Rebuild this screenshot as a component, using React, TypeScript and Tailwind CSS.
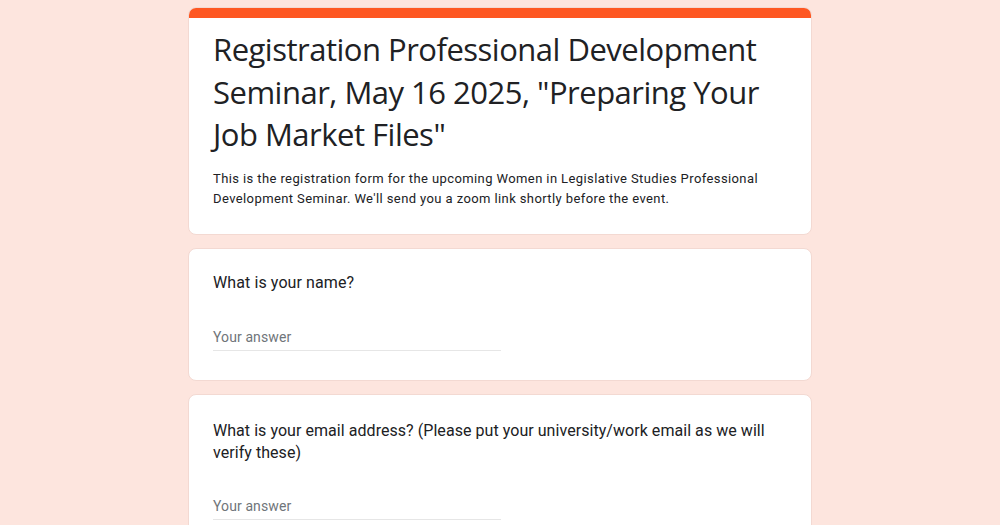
export default function App() {
  return (
    <div className="min-h-[525px] bg-[#fde5de] pt-[7px] font-['Roboto',sans-serif]">
      <div className="mx-auto flex w-[624px] flex-col gap-[13px]">
        {/* Header card */}
        <div className="overflow-hidden rounded-lg border border-[#f3d9d2] bg-white">
          <div className="h-[10px] bg-[#fe5722]" />
          <div className="px-6 pb-[25px] pt-[10px]">
            <h1 className="font-['Open_Sans',sans-serif] text-[31px] leading-[42.5px] tracking-[-0.5px] text-[#202124]">
              Registration Professional Development Seminar, May 16 2025, "Preparing Your Job Market Files"
            </h1>
            <p className="mt-[13px] text-[13px] leading-[20px] tracking-[0.4px] text-[#202124]">
              This is the registration form for the upcoming Women in Legislative Studies Professional Development Seminar. We'll send you a zoom link shortly before the event.
            </p>
          </div>
        </div>

        {/* Question: name */}
        <div className="rounded-lg border border-[#f3d9d2] bg-white px-6 pb-[29px] pt-[23px]">
          <div className="text-[16px] leading-[22px] tracking-[0.1px] text-[#202124]">What is your name?</div>
          <div className="mt-[33px] w-[288px] border-b border-[#e6e6e6] pb-[3px] text-[14px] leading-[20px] tracking-[0.1px] text-[#70757a]">
            Your answer
          </div>
        </div>

        {/* Question: email */}
        <div className="rounded-lg border border-[#f3d9d2] bg-white px-6 pb-[30px] pt-[25px]">
          <div className="text-[16px] leading-[22px] tracking-[0.05px] text-[#202124]">
            What is your email address? (Please put your university/work email as we will verify these)
          </div>
          <div className="mt-[32px] w-[288px] border-b border-[#e6e6e6] pb-[3px] text-[14px] leading-[20px] tracking-[0.1px] text-[#70757a]">
            Your answer
          </div>
        </div>
      </div>
    </div>
  );
}
